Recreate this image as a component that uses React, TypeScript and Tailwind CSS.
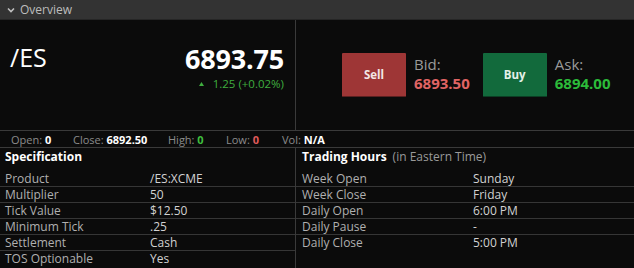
import React from 'react';

const spec = [
  ['Product', '/ES:XCME'],
  ['Multiplier', '50'],
  ['Tick Value', '$12.50'],
  ['Minimum Tick', '.25'],
  ['Settlement', 'Cash'],
  ['TOS Optionable', 'Yes'],
];

const hours = [
  ['Week Open', 'Sunday'],
  ['Week Close', 'Friday'],
  ['Daily Open', '6:00 PM'],
  ['Daily Pause', '-'],
  ['Daily Close', '5:00 PM'],
];

export default function App() {
  return (
    <div
      className="w-[634px] h-[268px] overflow-hidden bg-[#0b0b0b] text-[#c8c8c8]"
      style={{ fontFamily: '"Open Sans", "Noto Sans", sans-serif' }}
    >
      {/* header */}
      <div className="h-[20px] bg-[#333333] border-b border-[#262626] flex items-center pl-[7px] gap-[5px]">
        <svg width="8" height="6" viewBox="0 0 8 6" className="mt-[1px]">
          <path d="M1 1.5 L4 4.5 L7 1.5" stroke="#c0c0c0" strokeWidth="1.6" fill="none" />
        </svg>
        <span className="text-[12px] text-[#bdbdbd] leading-none">Overview</span>
      </div>

      {/* quote */}
      <div className="flex h-[110px]">
        <div className="w-[296px] border-r border-[#3a3a3a] relative">
          <div className="absolute left-[10px] top-[25px] text-[25px] text-white leading-none">/ES</div>
          <div className="absolute right-[11px] top-[25px] text-[27px] font-bold text-white leading-none tracking-[-0.2px]">
            6893.75
          </div>
          <div className="absolute right-[11px] top-[58px] flex items-center gap-[9px] text-[11.5px] text-[#3fae3f] leading-none">
            <svg width="5" height="4" viewBox="0 0 5 4">
              <path d="M2.5 0 L5 4 L0 4 Z" fill="#3fae3f" />
            </svg>
            <span>1.25 (+0.02%)</span>
          </div>
        </div>
        <div className="flex-1 flex items-start pt-[33px] pl-[46px]">
          <button className="w-[64px] h-[44px] bg-[#9e3636] border-b border-[#5a2020] text-[11.5px] font-bold text-[#f3e6e6] rounded-[1px]">
            Sell
          </button>
          <div className="ml-[8px] mt-[4px] leading-none">
            <div className="text-[15px] text-[#9a9a9a]">Bid:</div>
            <div className="text-[15px] font-bold text-[#e06464] mt-[4px]">6893.50</div>
          </div>
          <button className="ml-[13px] w-[64px] h-[44px] bg-[#126a3c] border-b border-[#0b3f24] text-[11.5px] font-bold text-[#e4f1e8] rounded-[1px]">
            Buy
          </button>
          <div className="ml-[8px] mt-[4px] leading-none">
            <div className="text-[15px] text-[#9a9a9a]">Ask:</div>
            <div className="text-[15px] font-bold text-[#2cbb3a] mt-[4px]">6894.00</div>
          </div>
        </div>
      </div>

      {/* stats */}
      <div className="h-[18px] border-y border-[#3a3a3a] flex items-center text-[11px] text-[#8c8c8c] pl-[11px] leading-none">
        <span className="w-[62px]">Open: <b className="text-white">0</b></span>
        <span className="w-[95px]">Close: <b className="text-white">6892.50</b></span>
        <span className="w-[58px]">High: <b className="text-[#3fbf3f]">0</b></span>
        <span className="w-[56px]">Low: <b className="text-[#e05a5a]">0</b></span>
        <span>Vol: <b className="text-white">N/A</b></span>
      </div>

      {/* tables */}
      <div className="flex text-[12px] leading-none">
        <div className="w-[296px] border-r border-[#3a3a3a] h-[120px]">
          <div className="pl-[5px] h-[23px] pt-[3px] font-bold text-white">Specification</div>
          {spec.map(([k, v], i) => (
            <div
              key={k}
              className={`flex h-[16px] items-center pl-[5px] ${i < spec.length - 1 ? 'border-b border-[#363636]' : ''}`}
            >
              <span className="w-[145px] text-[#b0b0b0]">{k}</span>
              <span className="text-[#d2d2d2]">{v}</span>
            </div>
          ))}
        </div>
        <div className="flex-1">
          <div className="pl-[6px] h-[23px] pt-[3px]">
            <span className="font-bold text-white">Trading Hours</span>
            <span className="ml-[6px] text-[#9a9a9a]">(in Eastern Time)</span>
          </div>
          {hours.map(([k, v], i) => (
            <div
              key={k}
              className={`flex h-[16px] items-center pl-[6px] ${i < hours.length - 1 ? 'border-b border-[#363636]' : ''}`}
            >
              <span className="w-[171px] text-[#b0b0b0]">{k}</span>
              <span className="text-[#d2d2d2]">{v}</span>
            </div>
          ))}
        </div>
      </div>
    </div>
  );
}
